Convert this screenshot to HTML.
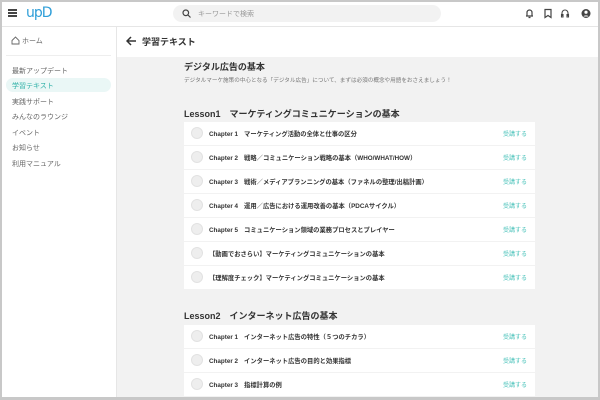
<!DOCTYPE html>
<html><head><meta charset="utf-8"><style>
*{margin:0;padding:0;box-sizing:border-box}
body{width:600px;height:400px;overflow:hidden;font-family:"Liberation Sans","Noto Sans CJK JP",sans-serif;background:#fff;position:relative;color:#333}
.frame{position:absolute;inset:0;border:2px solid #c8c8c8;border-bottom-width:3px;z-index:10;pointer-events:none}
.hdr{position:absolute;left:0;top:0;width:600px;height:27px;border-bottom:1px solid #e6e6e6;background:#fff}
.side{position:absolute;left:0;top:27px;width:117px;height:373px;border-right:1px solid #e6e6e6;background:#fff}
.main{position:absolute;left:117px;top:27px;right:0;bottom:0;background:#f2f2f2}
.tbar{position:absolute;left:0;top:0;right:0;height:30px;background:#fff}
.si{position:absolute;left:12px;font-size:7px;color:#666}
.row{position:absolute;left:67px;width:351px;height:23px;background:#fff}
.row .c{position:absolute;left:7px;top:5px;width:12px;height:12px;border-radius:50%;background:#eee;border:1px solid #e2e2e2}
.row .t{position:absolute;left:25px;top:7px;font-size:6.3px;font-weight:bold;color:#333;white-space:nowrap}
.row .t b{margin-right:6px}
.row .a{position:absolute;right:8px;top:7px;font-size:6px;color:#4cc3bb}
.les{position:absolute;left:67px;font-size:9px;font-weight:bold;color:#333}
</style></head><body>
<div class="frame"></div>
<div class="hdr">
 <div style="position:absolute;left:8px;top:9px;width:9px;height:1.5px;background:#444;box-shadow:0 3px 0 #444,0 6px 0 #444"></div>
 <div style="position:absolute;left:26px;top:5px;font-size:14px;font-weight:normal;color:#2e9ed8;font-family:'DejaVu Sans',sans-serif;letter-spacing:-1px">upD</div>
 <div style="position:absolute;left:173px;top:5px;width:268px;height:17px;border-radius:9px;background:#f2f2f2"></div>
 <svg style="position:absolute;left:182px;top:9px" width="9" height="9" viewBox="0 0 9 9"><circle cx="3.8" cy="3.8" r="2.8" fill="none" stroke="#444" stroke-width="1.2"/><line x1="6" y1="6" x2="8.5" y2="8.5" stroke="#444" stroke-width="1.2"/></svg>
 <div style="position:absolute;left:198px;top:9px;font-size:7px;color:#999">キーワードで検索</div>
 <svg style="position:absolute;left:524px;top:8px" width="70" height="11" viewBox="0 0 70 11">
  <path d="M2 8h7M3 8V4.5a2.5 2.5 0 0 1 5 0V8M4.5 9.5h2" fill="none" stroke="#444" stroke-width="1.2"/>
  <path d="M21 1.5h6v8l-3-2-3 2z" fill="none" stroke="#444" stroke-width="1.2"/>
  <path d="M38 8V5a3 3 0 0 1 6 0v3M37.5 6.5h1.5v2.5h-1.5zM43 6.5h1.5v2.5H43z" fill="none" stroke="#444" stroke-width="1.1"/>
  <circle cx="62" cy="5.5" r="4.5" fill="#444"/><circle cx="62" cy="4.2" r="1.6" fill="#fff"/><path d="M59.3 8.5a3 2 0 0 1 5.4 0" fill="#fff"/>
 </svg>
</div>
<div class="side">
 <svg style="position:absolute;left:11px;top:9px" width="9" height="9" viewBox="0 0 9 9"><path d="M1 4.5L4.5 1 8 4.5V8H1z" fill="none" stroke="#666" stroke-width="0.9"/></svg>
 <div class="si" style="left:22px;top:9px">ホーム</div>
 <div style="position:absolute;left:6px;top:28px;width:105px;height:1px;background:#eee"></div>
 <div class="si" style="top:39px">最新アップデート</div>
 <div style="position:absolute;left:6px;top:51px;width:105px;height:14px;border-radius:7px;background:#eaf7f6"></div>
 <div class="si" style="top:54px;color:#2fb0a7">学習テキスト</div>
 <div class="si" style="top:70px">実践サポート</div>
 <div class="si" style="top:85px">みんなのラウンジ</div>
 <div class="si" style="top:101px">イベント</div>
 <div class="si" style="top:116px">お知らせ</div>
 <div class="si" style="top:132px">利用マニュアル</div>
</div>
<div class="main">
 <div class="tbar">
  <svg style="position:absolute;left:9px;top:9px" width="11" height="10" viewBox="0 0 11 10"><path d="M10 5H1.5M5 1L1 5l4 4" fill="none" stroke="#333" stroke-width="1.5"/></svg>
  <div style="position:absolute;left:25px;top:8px;font-size:9px;font-weight:bold;color:#333">学習テキスト</div>
 </div>
 <div style="position:absolute;left:67px;top:33px;font-size:9px;font-weight:bold;color:#333">デジタル広告の基本</div>
 <div style="position:absolute;left:67px;top:49px;font-size:5.6px;color:#777;white-space:nowrap">デジタルマーケ施策の中心となる「デジタル広告」について、まずは必須の概念や用語をおさえましょう！</div>
 <div class="les" style="top:80px">Lesson1　マーケティングコミュニケーションの基本</div>
 <div class="row" style="top:95px"><div class="c"></div><div class="t"><b>Chapter 1</b>マーケティング活動の全体と仕事の区分</div><div class="a">受講する</div></div>
 <div class="row" style="top:119px"><div class="c"></div><div class="t"><b>Chapter 2</b>戦略／コミュニケーション戦略の基本（WHO/WHAT/HOW）</div><div class="a">受講する</div></div>
 <div class="row" style="top:143px"><div class="c"></div><div class="t"><b>Chapter 3</b>戦術／メディアプランニングの基本（ファネルの整理/出稿計画）</div><div class="a">受講する</div></div>
 <div class="row" style="top:167px"><div class="c"></div><div class="t"><b>Chapter 4</b>運用／広告における運用改善の基本（PDCAサイクル）</div><div class="a">受講する</div></div>
 <div class="row" style="top:191px"><div class="c"></div><div class="t"><b>Chapter 5</b>コミュニケーション領域の業務プロセスとプレイヤー</div><div class="a">受講する</div></div>
 <div class="row" style="top:215px"><div class="c"></div><div class="t">【動画でおさらい】マーケティングコミュニケーションの基本</div><div class="a">受講する</div></div>
 <div class="row" style="top:239px"><div class="c"></div><div class="t">【理解度チェック】マーケティングコミュニケーションの基本</div><div class="a">受講する</div></div>
 <div class="les" style="top:282px">Lesson2　インターネット広告の基本</div>
 <div class="row" style="top:298px"><div class="c"></div><div class="t"><b>Chapter 1</b>インターネット広告の特性（５つのチカラ）</div><div class="a">受講する</div></div>
 <div class="row" style="top:322px"><div class="c"></div><div class="t"><b>Chapter 2</b>インターネット広告の目的と効果指標</div><div class="a">受講する</div></div>
 <div class="row" style="top:346px"><div class="c"></div><div class="t"><b>Chapter 3</b>指標計算の例</div><div class="a">受講する</div></div>
</div>
</body></html>
